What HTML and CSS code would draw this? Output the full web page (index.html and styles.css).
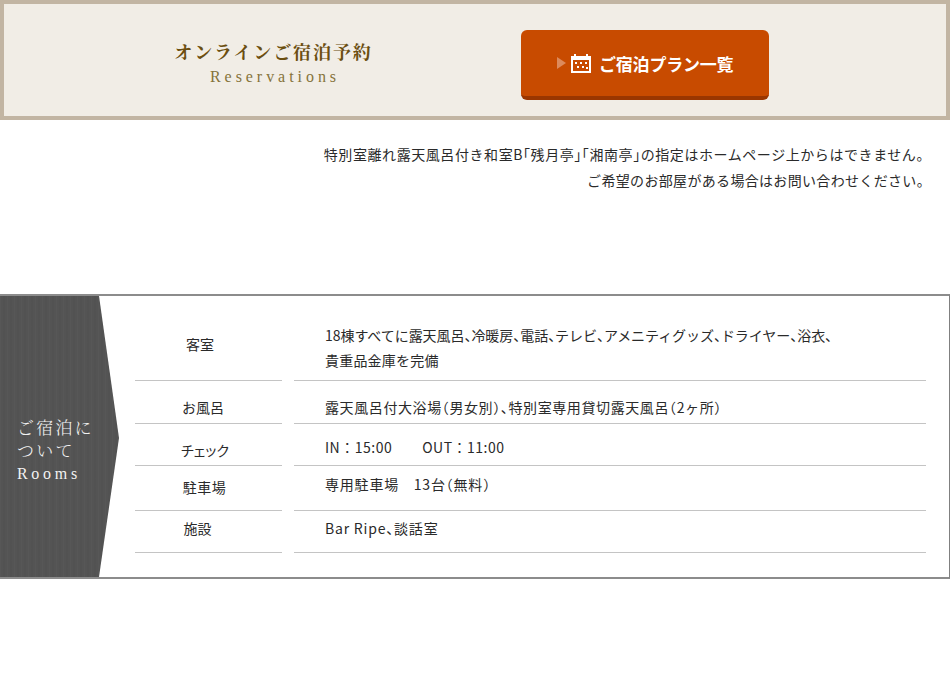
FILE: index.html
```html
<!DOCTYPE html>
<html lang="ja">
<head>
<meta charset="utf-8">
<title>ご宿泊について</title>
<link rel="stylesheet" href="styles.css">
</head>
<body>
<section class="reserve">
  <div class="reserve-title">
    <h2>オンラインご宿泊予約</h2>
    <p>Reservations</p>
  </div>
  <a class="plan-btn" href="#">
    <span class="arrow"></span>
    <svg class="cal" width="22" height="20" viewBox="0 0 22 20" aria-hidden="true">
      <path fill="#fff" fill-rule="evenodd" d="M1 3h3V1h2v2h10V1h2v2h3v17H1zM3 7v11h16V7z"/>
      <path fill="#fff" d="M5 9h2v2H5zM10 9h2v2h-2zM15 9h2v2h-2zM7 13h2v2H7zM12 13h2v2h-2zM16 14h2v2h-2z"/>
    </svg>
    <span>ご宿泊プラン一覧</span>
  </a>
</section>
<div class="note">
  <p class="note-long">特別室離れ露天風呂付き和室B<span class="h">「</span>残月亭<span class="h">」「</span>湘南亭<span class="h">」</span>の指定はホームページ上からはできません。</p>
  <p>ご希望のお部屋がある場合はお問い合わせください。</p>
</div>
<section class="rooms">
  <div class="rooms-head">
    <h3>ご宿泊に<br>ついて</h3>
    <p>Rooms</p>
  </div>
  <div class="rooms-table">
    <div class="row row-a"><div class="th">客室</div><div class="td"><span class="first">18棟すべてに露天風呂<span class="h">、</span>冷暖房<span class="h">、</span>電話<span class="h">、</span>テレビ<span class="h">、</span>アメニティグッズ<span class="h">、</span>ドライヤー<span class="h">、</span>浴衣<span class="h">、</span></span><br>貴重品金庫を完備</div></div>
    <div class="row row-b"><div class="th">お風呂</div><div class="td">露天風呂付大浴場<span class="h">（</span>男女別<span class="h">）、</span>特別室専用貸切露天風呂<span class="h">（</span>2ヶ所<span class="h">）</span></div></div>
    <div class="row row-c"><div class="th kana">チェック</div><div class="td"><span class="in">IN：15:00</span>OUT：11:00</div></div>
    <div class="row row-d"><div class="th">駐車場</div><div class="td">専用駐車場　13台<span class="h">（</span>無料<span class="h">）</span></div></div>
    <div class="row row-e"><div class="th">施設</div><div class="td">Bar Ripe<span class="h">、</span>談話室</div></div>
  </div>
</section>
</body>
</html>
```
FILE: styles.css
```css
* { box-sizing: border-box; margin: 0; padding: 0; }
html, body { background: #fff; }
body {
  width: 950px;
  height: 696px;
  overflow: hidden;
  font-family: "Liberation Sans", "Noto Sans CJK JP", sans-serif;
  color: #222;
}
.h { font-feature-settings: "halt"; }
.reserve {
  height: 120px;
  background: #f1ede6;
  border: 4px solid #c2b5a3;
  display: flex;
  align-items: flex-start;
}
.reserve-title {
  width: 517px;
  padding-top: 34px;
  padding-left: 22px;
  text-align: center;
  color: #6b4e10;
}
.reserve-title h2 {
  font-size: 18px;
  line-height: 26px;
  font-weight: 700;
  letter-spacing: 1.9px;
  font-family: "Noto Serif CJK JP", "Noto Sans CJK JP", serif;
}
.reserve-title p {
  margin-top: 3px;
  padding-left: 3px;
  font-family: "Liberation Serif", serif;
  font-size: 16px;
  line-height: 20px;
  letter-spacing: 3.95px;
  color: #85733a;
}
.plan-btn {
  margin-top: 26px;
  width: 248px;
  height: 70px;
  background: #c84b00;
  border-bottom: 4px solid #9a3600;
  border-radius: 6px;
  display: flex;
  align-items: center;
  padding-left: 36px;
  color: #fff;
  text-decoration: none;
  font-size: 17px;
  letter-spacing: -0.2px;
  font-weight: 700;
  font-family: "Noto Sans CJK JP", sans-serif;
}
.arrow {
  width: 0;
  height: 0;
  border-left: 9px solid #dc8a5c;
  border-top: 6px solid transparent;
  border-bottom: 6px solid transparent;
  margin-right: 4px;
}
.cal { margin-right: 7px; }
.note {
  height: 174px;
  padding: 21px 19px 0 0;
  text-align: right;
  font-size: 14px;
  line-height: 26px;
  letter-spacing: 0.33px;
  font-family: "Noto Sans CJK JP", sans-serif;
  font-weight: 400;
  color: #2a2a2a;
}
.note-long { letter-spacing: 0.57px; }
.rooms {
  height: 285px;
  border-top: 2px solid #8c8c8c;
  border-bottom: 2px solid #8c8c8c;
  border-right: 1px solid #808080;
  display: flex;
  align-items: flex-start;
}
.rooms-head {
  width: 119px;
  height: 281px;
  background:
    repeating-linear-gradient(90deg, rgba(255,255,255,.018) 0 1px, transparent 1px 3px, rgba(0,0,0,.025) 3px 5px, transparent 5px 7px),
    #545454;
  clip-path: polygon(0 0, 99px 0, 119px 142px, 99px 100%, 0 100%);
  padding: 119px 0 0 17px;
  color: #f2f2f2;
}
.rooms-head h3 {
  font-family: "Noto Serif CJK JP", "Noto Sans CJK JP", serif;
  font-size: 17px;
  line-height: 23px;
  font-weight: 300;
  letter-spacing: 2.2px;
}
.rooms-head p {
  margin-top: 3px;
  font-family: "Liberation Serif", serif;
  font-size: 16px;
  line-height: 20px;
  letter-spacing: 3.7px;
}
.rooms-table { margin-left: 16px; width: 791px; }
.row {
  display: grid;
  grid-template-columns: 147px 632px;
  column-gap: 12px;
  font-family: "Noto Sans CJK JP", sans-serif;
  font-weight: 400;
  font-size: 14px;
  color: #2a2a2a;
}
.th, .td { border-bottom: 1px solid #c4c4c4; }
.th { text-align: center; padding-right: 17px; }
.kana { font-feature-settings: "palt"; }
.td { padding-left: 31px; line-height: 25px; letter-spacing: 0.2px; }
.first { letter-spacing: -0.05px; }
.row-a .th, .row-a .td { height: 85px; }
.row-b .th, .row-b .td { height: 43px; }
.row-c .th, .row-c .td { height: 42px; }
.row-d .th, .row-d .td { height: 45px; }
.row-e .th, .row-e .td { height: 42px; }
.row-a .th { padding-top: 38px; }
.row-a .td { padding-top: 27px; }
.row-b .th { padding-top: 16px; padding-right: 11px; }
.row-b .td { padding-top: 14px; letter-spacing: 0.6px; }
.row-c .th { padding-top: 16px; padding-right: 7px; }
.row-c .td { padding-top: 11px; letter-spacing: 0.5px; }
.row-d .th { padding-top: 11px; padding-right: 8px; letter-spacing: 0.5px; }
.row-d .td { padding-top: 6px; letter-spacing: 0.8px; }
.row-e .th { padding-top: 7px; padding-right: 22px; }
.row-e .td { padding-top: 5px; letter-spacing: 0.8px; }
.in { margin-right: 30px; }
```
